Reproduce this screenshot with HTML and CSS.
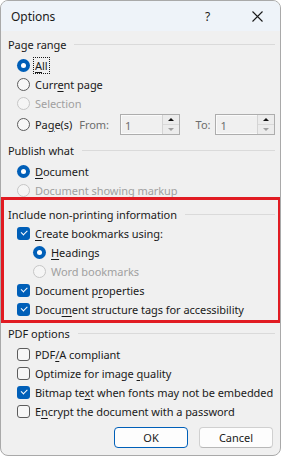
FILE: index.html
```html
<!DOCTYPE html>
<html lang="en">
<head>
  <meta charset="UTF-8" />
  <title>Options</title>
  <link rel="stylesheet" href="styles.css">
</head>
<body>

  <div class="window">
    <!-- Title bar -->
    <div class="titlebar">
      <span class="title">Options</span>
      <span class="help">?</span>
      <span class="close">
        <svg width="11" height="11" viewBox="0 0 11 11"><path d="M0.5 0.5 L10.5 10.5 M10.5 0.5 L0.5 10.5" stroke="#1a1a1a" stroke-width="1.1" fill="none"/></svg>
      </span>
    </div>

    <div class="content">
      <!-- Page range -->
      <section class="group group-range">
        <div class="group-head"><span>Page range</span></div>
        <div class="items">
          <div class="option"><span class="radio checked"></span><span class="label focus"><u>A</u>ll</span></div>
          <div class="option"><span class="radio"></span><span class="label">Curr<u>e</u>nt page</span></div>
          <div class="option disabled"><span class="radio"></span><span class="label">Selection</span></div>
          <div class="option pages-row">
            <span class="radio"></span><span class="label">Pa<u>g</u>e(s)</span>
            <span class="field-label from">From:</span>
            <span class="spin"><span class="spin-value">1</span><span class="spin-btns"><span class="spin-up"></span><span class="spin-down"></span></span></span>
            <span class="field-label to">To:</span>
            <span class="spin"><span class="spin-value">1</span><span class="spin-btns"><span class="spin-up"></span><span class="spin-down"></span></span></span>
          </div>
        </div>
      </section>

      <!-- Publish what -->
      <section class="group group-publish">
        <div class="group-head"><span>Publish what</span></div>
        <div class="items">
          <div class="option"><span class="radio checked"></span><span class="label"><u>D</u>ocument</span></div>
          <div class="option disabled"><span class="radio"></span><span class="label">Document showing markup</span></div>
        </div>
      </section>

      <!-- Include non-printing information (highlighted) -->
      <section class="group group-include">
        <div class="group-head"><span>Include non-printing information</span></div>
        <div class="items">
          <div class="option"><span class="check checked"></span><span class="label"><u>C</u>reate bookmarks using:</span></div>
          <div class="option sub"><span class="radio checked"></span><span class="label"><u>H</u>eadings</span></div>
          <div class="option sub disabled"><span class="radio"></span><span class="label">Word bookmarks</span></div>
          <div class="option"><span class="check checked"></span><span class="label">Document p<u>r</u>operties</span></div>
          <div class="option"><span class="check checked"></span><span class="label">Docu<u>m</u>ent structure tags for accessibility</span></div>
        </div>
      </section>

      <!-- PDF options -->
      <section class="group group-pdf">
        <div class="group-head"><span>PDF options</span></div>
        <div class="items">
          <div class="option"><span class="check"></span><span class="label">PDF<u>/</u>A compliant</span></div>
          <div class="option"><span class="check"></span><span class="label">Optimize for image <u>q</u>uality</span></div>
          <div class="option"><span class="check checked"></span><span class="label">Bitmap te<u>x</u>t when fonts may not be embedded</span></div>
          <div class="option"><span class="check"></span><span class="label">E<u>n</u>crypt the document with a password</span></div>
        </div>
      </section>

      <div class="buttons">
        <button class="btn btn-default">OK</button>
        <button class="btn">Cancel</button>
      </div>
    </div>
  </div>

</body>
</html>
```

FILE: styles.css
```css
/* Page */
body {
  margin: 0;
  background: #ffffff;
  font-family: 'Noto Sans', 'Open Sans', sans-serif;
  font-size: 11px;
  letter-spacing: -0.05px;
  color: #1a1a1a;
}
/* Dialog window */
.window {
  width: 281px;
  height: 456px;
  box-sizing: border-box;
  border: 1px solid #a9a9a9;
  border-radius: 8px;
  overflow: hidden;
  background: #f0f0f0;
  display: flex;
  flex-direction: column;
  white-space: nowrap;
}
/* Title bar */
.titlebar {
  height: 30px;
  flex: none;
  background: #eef3f9;
  display: flex;
  align-items: center;
  padding-left: 10px;
}
.title {
  font-size: 12px;
  flex: 1;
}
.help {
  width: 12px;
  font-size: 12px;
  margin-right: 35px;
}
.close {
  display: flex;
  margin-right: 17px;
}
/* Content area */
.content {
  flex: 1;
  padding: 3px 5px 0 7px;
  display: flex;
  flex-direction: column;
}
.group {
  display: flex;
  flex-direction: column;
}
.group-head {
  height: 20px;
  display: flex;
  align-items: center;
  gap: 8px;
}
.group-head::after {
  content: "";
  flex: 1;
  height: 1px;
  background: #dadada;
}
.items {
  display: flex;
  flex-direction: column;
  margin-top: 2px;
}
.group-publish { margin-top: 5px; }
.group-include { margin-top: 4px; position: relative; }
.group-include .items { margin-top: 0; }
.group-pdf { margin-top: 4px; }

/* Red highlight frame over the group */
.group-include::after {
  content: "";
  position: absolute;
  top: -7px;
  left: -7px;
  right: -6px;
  bottom: -4px;
  border: 3px solid #e11b22;
  pointer-events: none;
}

/* Option rows */
.option {
  height: 19px;
  display: flex;
  align-items: center;
  padding-left: 9px;
}
.option.sub {
  padding-left: 25px;
}
.label {
  margin-left: 5px;
  line-height: 15px;
}
.label u {
  text-underline-offset: 2px;
}
.label.focus {
  outline: 1px dotted #1a1a1a;
  outline-offset: 0;
  padding: 0 1px;
  margin-left: 4px;
}
.option.disabled .label {
  color: #a0a0a0;
}

/* Radio buttons */
.radio {
  width: 13px;
  height: 13px;
  box-sizing: border-box;
  border-radius: 50%;
  border: 1px solid #5c5c5c;
  background: #f7f7f7;
  flex: none;
  position: relative;
}
.radio.checked {
  border: none;
  background: #005fb8;
}
.radio.checked::after {
  content: "";
  position: absolute;
  left: 4px;
  top: 4px;
  width: 5px;
  height: 5px;
  border-radius: 50%;
  background: #ffffff;
}
.option.disabled .radio {
  border-color: #c6c6c6;
  background: #f5f5f5;
}

/* Checkboxes */
.check {
  width: 13px;
  height: 13px;
  box-sizing: border-box;
  border-radius: 3px;
  border: 1px solid #5c5c5c;
  background: #f7f7f7;
  flex: none;
  position: relative;
}
.check.checked {
  border: none;
  background: #005fb8;
}
.check.checked::after {
  content: "";
  position: absolute;
  left: 4px;
  top: 3px;
  width: 5px;
  height: 2.5px;
  border-left: 1px solid #ffffff;
  border-bottom: 1px solid #ffffff;
  transform: rotate(-45deg);
}

/* Page(s) row with spin boxes */
.pages-row {
  height: 22px;
}
.field-label {
  color: #6d6d6d;
}
.from { margin-left: 7px; }
.to { margin-left: 16px; }
.spin {
  width: 60px;
  height: 21px;
  box-sizing: border-box;
  border: 1px solid #adadad;
  background: #f0f0f0;
  display: flex;
}
.from + .spin { margin-left: 11px; }
.to + .spin { margin-left: 5px; }
.spin-value {
  flex: 1;
  padding-left: 3px;
  color: #6d6d6d;
  line-height: 19px;
  border: 1px solid #fafafa;
  border-right: none;
}
.spin-btns {
  width: 16px;
  display: flex;
  flex-direction: column;
  border-left: 1px solid #d4d4d4;
}
.spin-up,
.spin-down {
  flex: 1;
  display: flex;
  align-items: center;
  justify-content: center;
  background: #ececec;
}
.spin-up {
  border-bottom: 1px solid #d9d9d9;
}
.spin-up::before {
  content: "";
  border-left: 3px solid transparent;
  border-right: 3px solid transparent;
  border-bottom: 3px solid #111111;
}
.spin-down::before {
  content: "";
  border-left: 3px solid transparent;
  border-right: 3px solid transparent;
  border-top: 3px solid #a0a0a0;
}

/* Dialog buttons */
.buttons {
  display: flex;
  justify-content: flex-end;
  gap: 11px;
  margin-top: 6px;
  padding-right: 2px;
}
.btn {
  width: 74px;
  height: 21px;
  box-sizing: border-box;
  font-family: inherit;
  font-size: 11px;
  color: #1a1a1a;
  background: #fdfdfd;
  border: 1px solid #d0d0d0;
  border-bottom-color: #b8b8b8;
  border-radius: 4px;
  padding: 0;
}
.btn-default {
  border: 1px solid #005fb8;
}
```
